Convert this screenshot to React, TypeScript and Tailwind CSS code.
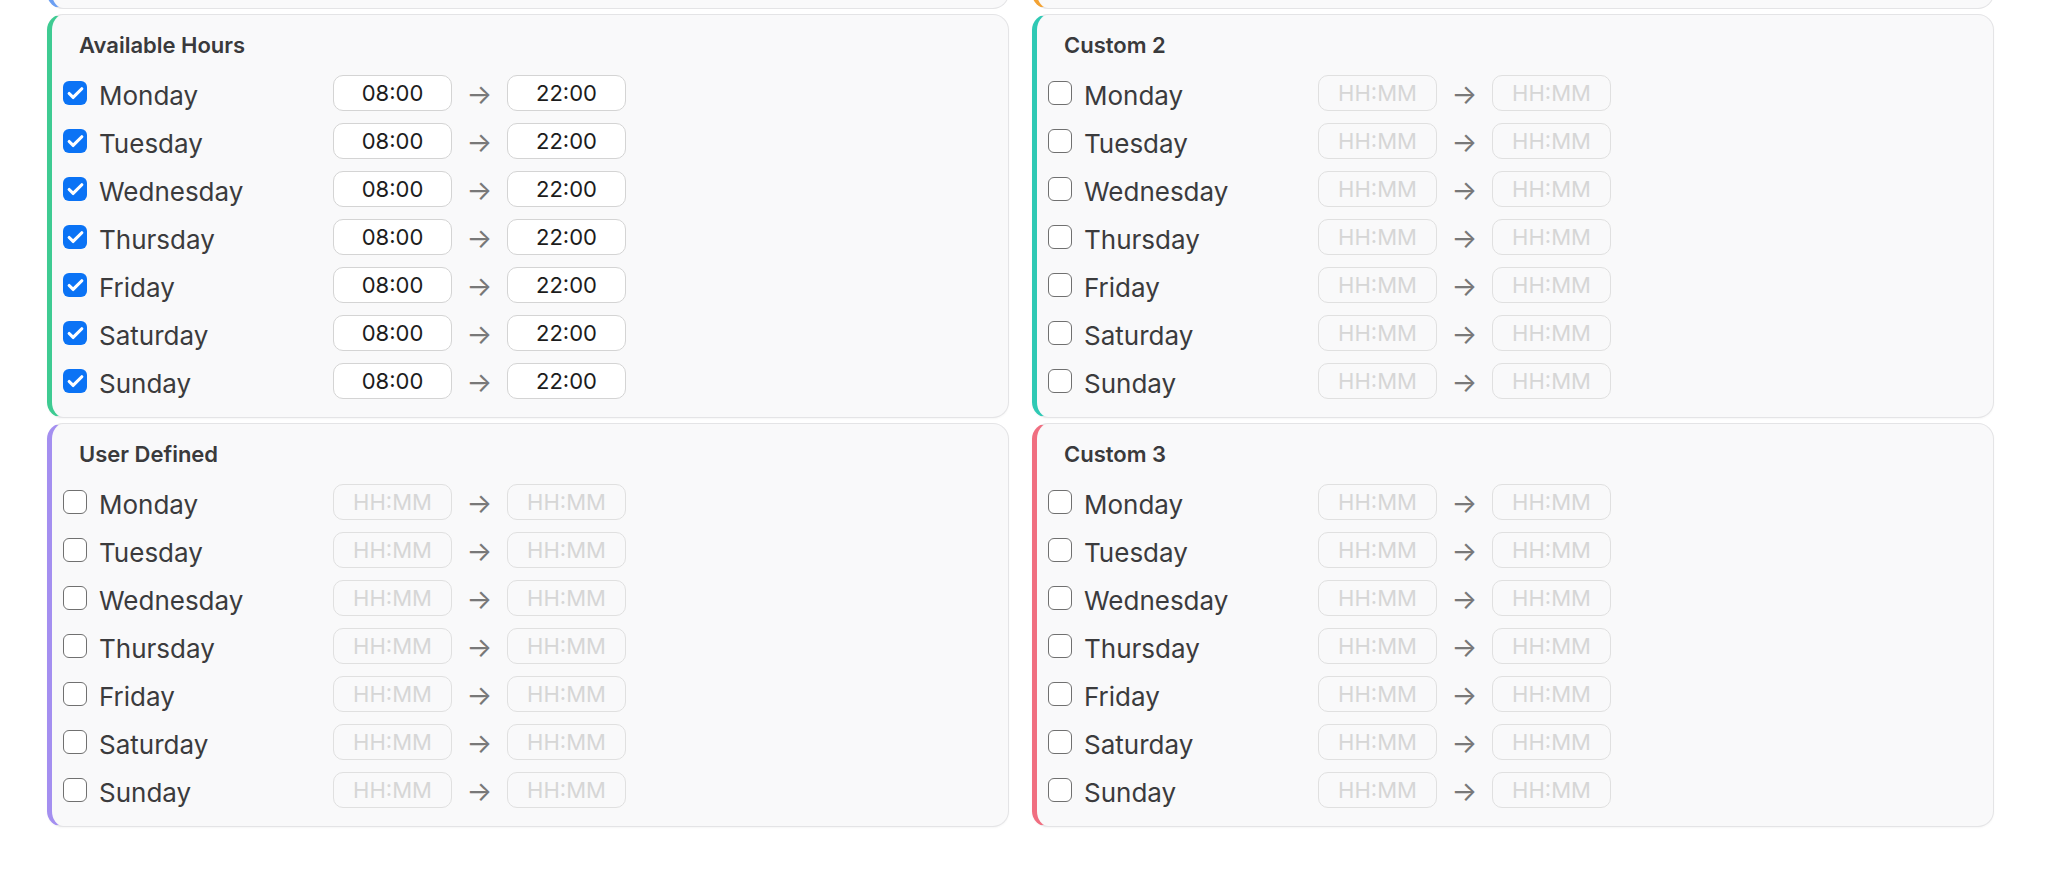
import React from "react";
import { Check } from "lucide-react";

const DAYS = ["Monday", "Tuesday", "Wednesday", "Thursday", "Friday", "Saturday", "Sunday"];

type Schedule = {
  title: string;
  stripe: string;
  enabled: boolean;
};

const Checkbox = ({ checked }: { checked: boolean }) =>
  checked ? (
    <div className="w-[24px] h-[24px] rounded-[6px] bg-[#0b73f5] flex items-center justify-center shrink-0">
      <Check className="w-[19px] h-[19px] text-white" strokeWidth={4} />
    </div>
  ) : (
    <div className="w-[24px] h-[24px] rounded-[6px] border-[1.5px] border-[#707070] bg-white shrink-0" />
  );

const TimeInput = ({ value, enabled }: { value: string; enabled: boolean }) => (
  <input
    readOnly
    defaultValue={value}
    placeholder="HH:MM"
    className={
      enabled
        ? "w-[119px] h-[36px] rounded-[10px] border border-[#d4d4d4] bg-white text-center text-[22px] text-[#1c1c1c] outline-none"
        : "w-[119px] h-[36px] rounded-[10px] border border-[#e0e0e0] bg-transparent text-center text-[22px] text-[#1c1c1c] outline-none placeholder:text-[#d6d6d6]"
    }
  />
);

const DayRow = ({ day, enabled }: { day: string; enabled: boolean }) => (
  <div className="h-[48px] flex items-center">
    <div className="w-[270px] flex items-center gap-[12px]">
      <Checkbox checked={enabled} />
      <span className="text-[26px] text-[#3b3b3d] leading-none mt-[6px]">{day}</span>
    </div>
    <TimeInput value={enabled ? "08:00" : ""} enabled={enabled} />
    <span className="w-[55px] text-center text-[27px] leading-none text-[#787878] mt-[3px]">→</span>
    <TimeInput value={enabled ? "22:00" : ""} enabled={enabled} />
  </div>
);

const Card = ({ s }: { s: Schedule }) => (
  <div
    className={`h-[404px] shrink-0 rounded-[16px] border border-[#e4e4e6] border-l-[5px] ${s.stripe} bg-[#f9f9fa] shadow-[0_1px_2px_rgba(0,0,0,0.04)] pt-[16px] pb-[11px] pl-[11px]`}
  >
    <h3 className="ml-[16px] text-[22px] leading-[28px] font-semibold text-[#3a3a3c]">{s.title}</h3>
    <div className="mt-[10px] flex flex-col">
      {DAYS.map((d) => (
        <DayRow key={d} day={d} enabled={s.enabled} />
      ))}
    </div>
  </div>
);

// the page is scrolled: only the bottom edge of the row above shows
const CutCard = ({ stripe }: { stripe: string }) => (
  <div className="h-[9px] overflow-hidden flex flex-col justify-end">
    <div
      className={`h-[404px] shrink-0 rounded-[16px] border border-[#e4e4e6] border-l-[5px] ${stripe} bg-[#f9f9fa]`}
    />
  </div>
);

const App = () => {
  const rows: Schedule[][] = [
    [
      { title: "Available Hours", stripe: "border-l-[#3ecb92]", enabled: true },
      { title: "Custom 2", stripe: "border-l-[#2fc9b4]", enabled: false },
    ],
    [
      { title: "User Defined", stripe: "border-l-[#a48ff0]", enabled: false },
      { title: "Custom 3", stripe: "border-l-[#f06e80]", enabled: false },
    ],
  ];

  return (
    <div className="min-h-screen bg-white font-['Inter',sans-serif] pl-[47px] pr-[54px]">
      <div className="grid grid-cols-2 gap-x-[23px] gap-y-[5px]">
        <CutCard stripe="border-l-[#6c9ff2]" />
        <CutCard stripe="border-l-[#f3a233]" />
        {rows.flat().map((s) => (
          <Card key={s.title} s={s} />
        ))}
      </div>
    </div>
  );
};

export default App;
